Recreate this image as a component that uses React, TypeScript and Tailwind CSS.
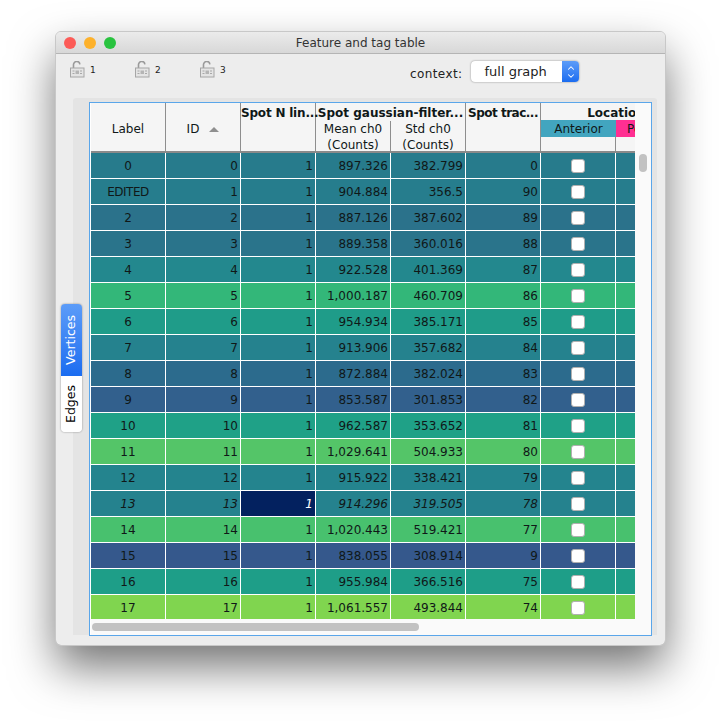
import { ChevronDown, ChevronUp } from 'lucide-react';
import type { ReactNode } from 'react';

interface Row {
  label: string;
  id: number;
  mean: string;
  std: string;
  track: number;
  color: string;
}

const rows: Row[] = [
  { label: '0', id: 0, mean: '897.326', std: '382.799', track: 0, color: 'bg-[#277b8c]' },
  { label: 'EDITED', id: 1, mean: '904.884', std: '356.5', track: 90, color: 'bg-[#267d8d]' },
  { label: '2', id: 2, mean: '887.126', std: '387.602', track: 89, color: 'bg-[#2b728b]' },
  { label: '3', id: 3, mean: '889.358', std: '360.016', track: 88, color: 'bg-[#2a748b]' },
  { label: '4', id: 4, mean: '922.528', std: '401.369', track: 87, color: 'bg-[#23888e]' },
  { label: '5', id: 5, mean: '1,000.187', std: '460.709', track: 86, color: 'bg-[#33b779]' },
  { label: '6', id: 6, mean: '954.934', std: '385.171', track: 85, color: 'bg-[#1f9c89]' },
  { label: '7', id: 7, mean: '913.906', std: '357.682', track: 84, color: 'bg-[#25828e]' },
  { label: '8', id: 8, mean: '872.884', std: '382.024', track: 83, color: 'bg-[#2c6b8d]' },
  { label: '9', id: 9, mean: '853.587', std: '301.853', track: 82, color: 'bg-[#32608d]' },
  { label: '10', id: 10, mean: '962.587', std: '353.652', track: 81, color: 'bg-[#1fa187]' },
  { label: '11', id: 11, mean: '1,029.641', std: '504.933', track: 80, color: 'bg-[#54c568]' },
  { label: '12', id: 12, mean: '915.922', std: '338.421', track: 79, color: 'bg-[#24848e]' },
  { label: '13', id: 13, mean: '914.296', std: '319.505', track: 78, color: 'bg-[#25828e]' },
  { label: '14', id: 14, mean: '1,020.443', std: '519.421', track: 77, color: 'bg-[#48c16e]' },
  { label: '15', id: 15, mean: '838.055', std: '308.914', track: 9, color: 'bg-[#35588c]' },
  { label: '16', id: 16, mean: '955.984', std: '366.516', track: 75, color: 'bg-[#1e9e88]' },
  { label: '17', id: 17, mean: '1,061.557', std: '493.844', track: 74, color: 'bg-[#80d54f]' },
];

function LockIcon() {
  return (
    <svg width="15" height="17" viewBox="0 0 15 17" fill="none">
      <path d="M3.5 7V4a3.2 3.2 0 0 1 6.4-.6" stroke="#9a9a9a" strokeWidth="1.6" />
      <rect x="0.5" y="7" width="13.5" height="9" fill="#e4e4e4" stroke="#a6a6a6" />
      <path d="M2.5 10h2M2.5 12.5h2M10 10h2M10 12.5h2" stroke="#a8a8a8" />
      <rect x="5.5" y="9.5" width="3.5" height="3.5" fill="#b5b5b5" />
    </svg>
  );
}

function Cell({ children, italic, selected }: { children: ReactNode; italic?: boolean; selected?: boolean }) {
  return (
    <div
      className={`w-[75px] shrink-0 border-r border-white pr-[2px] text-right leading-[26px] ${italic ? 'italic' : ''} ${selected ? 'bg-[#03215f] text-white' : ''}`}
    >
      {children}
    </div>
  );
}

function HeaderCol({ children, bold }: { children?: ReactNode; bold?: boolean }) {
  return (
    <div
      className={`w-[75px] shrink-0 whitespace-nowrap border-r border-[#8e8e8e] ${bold ? 'font-bold leading-[20px]' : ''}`}
    >
      {children}
    </div>
  );
}

function Table() {
  return (
    <div className="h-[516px] w-[544px] shrink-0 overflow-hidden text-[12px] text-[#101818]">
      <div className="flex h-[50px] w-[620px] border-b-2 border-[#8a8a8a] bg-[#f5f5f5] text-center leading-[16px]">
        <HeaderCol>
          <div className="mt-[18px]">Label</div>
        </HeaderCol>
        <HeaderCol>
          <div className="mt-[18px] flex items-center justify-center gap-[10px]">
            ID
            <div className="h-0 w-0 border-x-[5px] border-b-[5px] border-x-transparent border-b-[#8f8f8f]" />
          </div>
        </HeaderCol>
        <HeaderCol bold>
          <span className="tracking-[-0.2px]">Spot N lin...</span>
        </HeaderCol>
        <div className="w-[150px] shrink-0 border-r border-[#8e8e8e]">
          <div className="h-[18px] whitespace-nowrap font-bold leading-[20px]">Spot gaussian-filter...</div>
          <div className="flex h-[30px]">
            <div className="w-[75px] border-r border-[#8e8e8e]">
              Mean ch0
              <br />
              (Counts)
            </div>
            <div className="w-[74px]">
              Std ch0
              <br />
              (Counts)
            </div>
          </div>
        </div>
        <HeaderCol bold>
          <span className="tracking-[-0.5px]">Spot trac...</span>
        </HeaderCol>
        <div className="w-[150px] shrink-0">
          <div className="h-[17px] font-bold leading-[20px]">Location</div>
          <div className="flex h-[17px] leading-[18px]">
            <div className="w-[75px] bg-[#42a5bf]">Anterior</div>
            <div className="w-[75px] bg-[#ff2f92]">Posterior</div>
          </div>
          <div className="flex h-[14px]">
            <div className="w-[75px] border-r border-[#8e8e8e]" />
            <div className="w-[75px]" />
          </div>
        </div>
      </div>
      {rows.map((row) => (
        <div key={row.id} className={`flex h-[26px] w-[620px] border-b border-white ${row.color}`}>
          <div
            className={`w-[75px] shrink-0 border-r border-white text-center leading-[26px] ${row.id === 13 ? 'italic' : ''} ${row.label === 'EDITED' ? 'tracking-[-0.5px]' : ''}`}
          >
            {row.label}
          </div>
          <Cell italic={row.id === 13}>{row.id}</Cell>
          <Cell italic={row.id === 13} selected={row.id === 13}>
            1
          </Cell>
          <Cell italic={row.id === 13}>{row.mean}</Cell>
          <Cell italic={row.id === 13}>{row.std}</Cell>
          <Cell italic={row.id === 13}>{row.track}</Cell>
          <div className="flex w-[75px] shrink-0 items-center justify-center border-r border-white">
            <div className="h-[14px] w-[14px] rounded-[3px] border border-[#b0b0b0] bg-white" />
          </div>
          <div className="w-[75px] shrink-0" />
        </div>
      ))}
    </div>
  );
}

export default function App() {
  return (
    <div className="h-[726px] w-[721px] overflow-hidden bg-white pl-[56px] pt-[32px] font-['DejaVu_Sans',sans-serif]">
      <div className="flex h-[613px] w-[609px] flex-col rounded-[5px] bg-[#ededed] shadow-[0_22px_45px_rgba(0,0,0,0.55)] outline outline-1 outline-[#c8c8c8]">
        <div className="relative flex h-[22px] shrink-0 items-center justify-center rounded-t-[5px] border-b border-[#b5b5b5] bg-gradient-to-b from-[#ebebeb] to-[#d8d8d8] pt-[1px] text-[12px] text-[#333]">
          <div className="absolute left-[8px] top-[5px] flex gap-[8px]">
            <div className="h-[12px] w-[12px] rounded-full bg-[#fc5b57]" />
            <div className="h-[12px] w-[12px] rounded-full bg-[#fdb12b]" />
            <div className="h-[12px] w-[12px] rounded-full bg-[#29c33f]" />
          </div>
          Feature and tag table
        </div>

        <div className="flex h-[44px] shrink-0 pl-[14px]">
          <div className="flex w-[325px] gap-[45px] pt-[7px]">
            {['1', '2', '3'].map((n) => (
              <div key={n} className="flex h-[17px] w-[20px] shrink-0 items-center gap-[5px] text-[9px] text-[#222]">
                <div className="shrink-0">
                  <LockIcon />
                </div>
                <span className="mt-[2px]">{n}</span>
              </div>
            ))}
          </div>
          <div className="ml-[15px] flex items-start pt-[7px] text-[12px] text-[#222]">
            <span className="mr-[9px] mt-[4px] tracking-[0.4px]">context:</span>
            <div className="flex h-[21px] w-[108px] overflow-hidden rounded-[4px] bg-white shadow-[0_0_2px_rgba(0,0,0,0.45)]">
              <div className="flex-1 pl-[13px] text-[13px] leading-[22px]">full graph</div>
              <div className="flex w-[17px] flex-col items-center justify-center bg-gradient-to-b from-[#5c9cf8] to-[#1a6cf0] text-white">
                <ChevronUp size={10} strokeWidth={2.5} className="-mb-[1px]" />
                <ChevronDown size={10} strokeWidth={2.5} className="-mt-[1px]" />
              </div>
            </div>
          </div>
        </div>

        <div className="relative ml-[17px] flex h-[537px] w-[584px] rounded-t-[3px] bg-[#e4e4e4] pl-[16px] pt-[4px]">
          <div className="absolute -left-[12px] top-[206px] flex w-[21px] flex-col overflow-hidden rounded-[4px] text-[12.5px] shadow-[0_0_2px_rgba(0,0,0,0.45)]">
            <div className="flex h-[72px] items-center justify-center bg-gradient-to-b from-[#5c9cf8] to-[#1a6cf0] pr-[1px] text-white">
              <span className="rotate-180 [writing-mode:vertical-rl]">Vertices</span>
            </div>
            <div className="flex h-[56px] items-center justify-center bg-white pr-[1px] text-black">
              <span className="rotate-180 [writing-mode:vertical-rl]">Edges</span>
            </div>
          </div>

          <div className="flex h-[534px] w-[563px] border border-[#5aa6ea] bg-white pl-[1px]">
            <div className="flex w-[544px] shrink-0 flex-col">
              <Table />
              <div className="flex flex-1 items-start bg-[#fafafa] pl-[1px] pt-[4px]">
                <div className="h-[8px] w-[327px] rounded-full bg-[#c2c2c2]" />
              </div>
            </div>
            <div className="flex-1 bg-[#fafafa] pl-[4px] pt-[51px]">
              <div className="h-[18px] w-[8px] rounded-full bg-[#c2c2c2]" />
            </div>
          </div>
        </div>
      </div>
    </div>
  );
}
